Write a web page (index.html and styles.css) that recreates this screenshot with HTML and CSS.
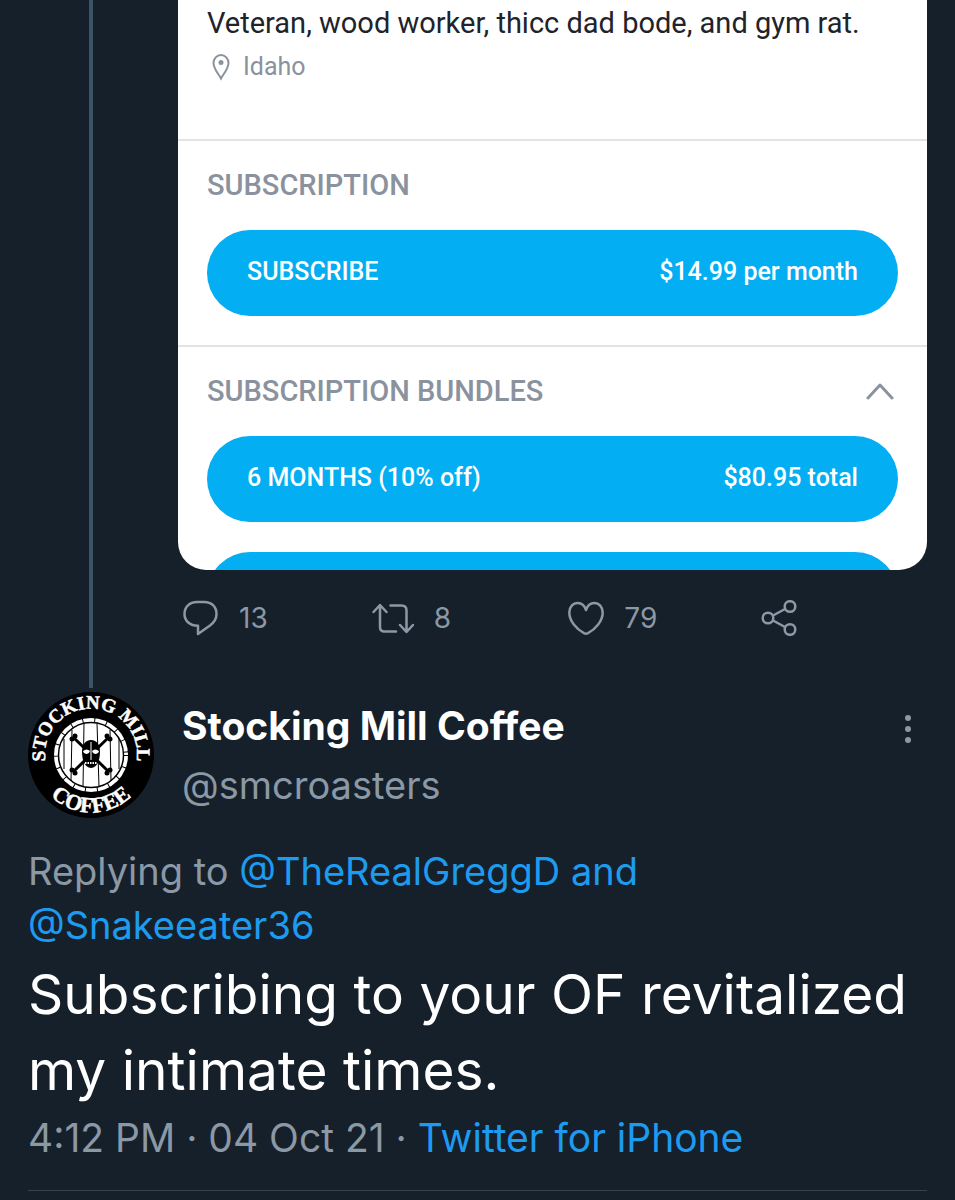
FILE: index.html
```html
<!DOCTYPE html>
<html lang="en">
<head>
    <meta charset="UTF-8">
    <meta name="viewport" content="width=device-width, initial-scale=1.0">
    <title>Thread</title>
    <link rel="stylesheet" href="styles.css">
</head>
<body>
    <main>
        <article class="parent">
            <div class="rail"></div>
            <div class="content">
                <div class="card">
                    <div class="profile">
                        <p class="bio">Veteran, wood worker, thicc dad bode, and gym rat.</p>
                        <p class="location">
                            <svg width="20" height="28" viewBox="0 0 20 28" fill="none" stroke="currentColor" stroke-width="2">
                                <path d="M10 25.5C8 21.5 2.5 16 2.5 10a7.5 8 0 0 1 15 0c0 6-5.500 11.500-7.500 15.500z"/>
                                <circle cx="10" cy="9.500" r="2.500" fill="currentColor" stroke="none"/>
                            </svg>
                            Idaho
                        </p>
                    </div>
                    <section>
                        <h3>SUBSCRIPTION</h3>
                        <button class="plan"><span>SUBSCRIBE</span><span>$14.99 per month</span></button>
                    </section>
                    <section>
                        <div class="section-head">
                            <h3>SUBSCRIPTION BUNDLES</h3>
                            <button class="icon-button toggle" aria-label="Collapse bundles">
                                <svg width="28" height="18" viewBox="0 0 28 18" fill="none" stroke="currentColor" stroke-width="3" stroke-linecap="round" stroke-linejoin="round">
                                    <path d="M2 15 14 2l12 13"/>
                                </svg>
                            </button>
                        </div>
                        <button class="plan"><span>6 MONTHS (10% off)</span><span>$80.95 total</span></button>
                    </section>
                    <div class="more-plans"><div class="plan"></div></div>
                </div>
                <div class="actions">
                    <button class="icon-button" aria-label="Reply">
                        <svg width="36" height="36" viewBox="0 0 36 36" fill="none" stroke="currentColor" stroke-width="2.500" stroke-linejoin="round">
                            <path d="M14 2h7c8 0 12.500 5 12.500 12 0 5-2.500 8.500-6.500 11.500L15 34v-8.200C7 25.800 1.500 21 1.500 14 1.500 7 6.500 2 14 2z"/>
                        </svg>
                        <span>13</span>
                    </button>
                    <button class="icon-button retweet" aria-label="Retweet">
                        <svg width="42" height="36" viewBox="0 0 42 36" fill="none" stroke="currentColor" stroke-width="2.500" stroke-linecap="round" stroke-linejoin="round">
                            <path d="M1.500 12 8 5l6.500 7M8 6v21q0 4.500 4.500 4.500h11.500M18.500 5.500h11q5 0 5 5V31M28 25l6.500 7 6.500-7"/>
                        </svg>
                        <span>8</span>
                    </button>
                    <button class="icon-button" aria-label="Like">
                        <svg width="36" height="36" viewBox="0 0 36 36" fill="none" stroke="currentColor" stroke-width="2.500" stroke-linejoin="round">
                            <path d="M18 10C16.500 5.500 13.500 3 9.800 3 5 3 1.300 7 1.300 12.500c0 9 7.700 17 14.700 20.700q2 1 4 0c7-3.700 14.700-11.700 14.700-20.700C34.700 7 31 3 26.200 3 22.500 3 19.500 5.500 18 10z"/>
                        </svg>
                        <span>79</span>
                    </button>
                    <button class="icon-button" aria-label="Share">
                        <svg width="36" height="36" viewBox="0 0 36 36" fill="none" stroke="currentColor" stroke-width="2.500">
                            <circle cx="7" cy="18" r="5.300"/>
                            <circle cx="29" cy="6.500" r="5.300"/>
                            <circle cx="29" cy="29.500" r="5.300"/>
                            <path d="M12 15.500 24 9M12 20.500 24 27"/>
                        </svg>
                    </button>
                </div>
            </div>
        </article>

        <article class="tweet">
            <header>
                <svg class="avatar" width="126" height="126" viewBox="0 0 126 126" role="img" aria-label="Stocking Mill Coffee logo">
                    <defs>
                        <path id="arc-top" d="M24 87A46 46 0 1 1 102 87"/>
                        <path id="arc-bottom" d="M8 81A58 58 0 0 0 118 81"/>
                    </defs>
                    <circle cx="63" cy="63" r="63"/>
                    <text class="logo-text"><textPath href="#arc-top" startOffset="50%">STOCKING MILL</textPath></text>
                    <text class="logo-text logo-text-bottom"><textPath href="#arc-bottom" startOffset="50%">COFFEE</textPath></text>
                    <!-- barrel head -->
                    <circle cx="63" cy="63" r="37" fill="#fff"/>
                    <g fill="none" stroke="#000">
                        <circle cx="63" cy="63" r="32.500" stroke-width="1.500"/>
                        <circle cx="63" cy="63" r="35" stroke-width="5" stroke-dasharray="1 11"/>
                        <path d="M44 38 43 89M56 31 55 95M69 31 71 95M82 38 83 89M36 47v30M91 47v30" stroke-width="1"/>
                        <path d="M46 46 80 79M80 46 46 79" stroke-width="3"/>
                    </g>
                    <circle cx="44" cy="47" r="2.500"/><circle cx="47" cy="44" r="2.500"/>
                    <circle cx="79" cy="44" r="2.500"/><circle cx="82" cy="47" r="2.500"/>
                    <circle cx="44" cy="78" r="2.500"/><circle cx="47" cy="81" r="2.500"/>
                    <circle cx="79" cy="81" r="2.500"/><circle cx="82" cy="78" r="2.500"/>
                    <path d="M63 48c-6 0-9 5-9 12 0 8 3 16 9 16s9-8 9-16c0-7-3-12-9-12z"/>
                    <path d="M55 59q4-3 7 0-1 3-4 3-3-1-3-3zM71 59q-4-3-7 0 1 3 4 3 3-1 3-3zM62.500 50h1v18h-1z" fill="#fff"/>
                    <path d="M57 71h12" stroke="#fff" stroke-width="2" stroke-dasharray="1.500 1"/>
                </svg>
                <div class="author">
                    <h2>Stocking Mill Coffee</h2>
                    <p class="handle">@smcroasters</p>
                </div>
                <button class="icon-button menu" aria-label="More options">
                    <svg width="8" height="30" viewBox="0 0 8 30" fill="currentColor">
                        <circle cx="4" cy="4" r="3"/><circle cx="4" cy="15" r="3"/><circle cx="4" cy="26" r="3"/>
                    </svg>
                </button>
            </header>
            <p class="replying">Replying to <a href="#">@TheRealGreggD and</a><br><a href="#">@Snakeeater36</a></p>
            <p class="message">Subscribing to your OF revitalized my intimate times.</p>
            <p class="meta">4:12 PM · 04 Oct 21 · <a href="#">Twitter for iPhone</a></p>
        </article>
    </main>
</body>
</html>
```
FILE: styles.css
```css
* {
    box-sizing: border-box;
}
body, h2, h3, p {
    margin: 0;
}
body {
    background-color: #16202a;
    color: #8b98a5;
    font-family: Inter, "Liberation Sans", sans-serif;
}
main {
    padding: 0 28px;
}
a {
    color: #1d9bf0;
    text-decoration: none;
}
button {
    border: none;
    font: inherit;
    cursor: pointer;
}
svg {
    flex-shrink: 0;
}
.parent {
    display: flex;
    gap: 24px;
}
.rail {
    flex: 0 0 126px;
    display: flex;
    justify-content: center;
    padding-bottom: 4px;
}
.rail::before {
    content: "";
    width: 4px;
    background-color: #3d5466;
}
.content {
    flex: 1;
    min-width: 0;
}

/* shared profile card */
.card {
    background-color: #fff;
    border-radius: 0 0 28px 28px;
    overflow: hidden;
    color: #8a929e;
    font-family: Roboto, sans-serif;
}
.profile {
    padding: 0 29px 50px;
}
.bio {
    padding-top: 1px;
    color: #20232a;
    font-size: 29px;
    line-height: 44px;
}
.location {
    display: flex;
    align-items: center;
    gap: 12px;
    padding-left: 4px;
    font-size: 25px;
    line-height: 44px;
}
section {
    border-top: 2px solid #e1e3e7;
    padding: 0 29px 29px;
}
section:last-of-type {
    padding-bottom: 30px;
}
.section-head {
    display: flex;
    justify-content: space-between;
    align-items: center;
}
h3 {
    font-size: 29px;
    font-weight: 500;
    line-height: 89px;
}
.plan {
    display: flex;
    justify-content: space-between;
    align-items: center;
    width: 100%;
    height: 86px;
    padding: 0 40px 4px;
    border-radius: 43px;
    background-color: #03aef2;
    color: #fff;
    font-size: 25px;
    font-weight: 500;
}
.more-plans {
    height: 18px;
    padding: 0 29px;
    overflow: hidden;
}

.icon-button {
    display: flex;
    align-items: center;
    padding: 0;
    background: none;
    color: inherit;
}
.toggle {
    margin-right: 4px;
}
.actions {
    display: grid;
    grid-template-columns: 1fr 1fr 1fr 166px;
    height: 122px;
    padding: 30px 0 56px 5px;
}
.actions .icon-button {
    gap: 20px;
    font-size: 28px;
}
.actions .retweet {
    margin-left: -4px;
}

.tweet header {
    display: flex;
    align-items: flex-start;
}
.author {
    flex: 1;
    padding: 4px 0 0 28px;
}
h2 {
    color: #fff;
    font-size: 39px;
    font-weight: 700;
    line-height: 60px;
}
.handle {
    font-size: 38px;
    line-height: 58px;
}
.menu {
    margin: 22px 15px 0 0;
}
.avatar {
    overflow: visible;
}
.logo-text {
    fill: #fff;
    stroke: #fff;
    stroke-width: 0.5px;
    font-family: "Liberation Serif", serif;
    font-size: 19px;
    font-weight: 700;
    text-anchor: middle;
}
.logo-text-bottom {
    font-size: 22px;
}
.replying {
    padding-top: 26px;
    font-size: 38px;
    line-height: 54px;
}
.message {
    padding-top: 4px;
    color: #fff;
    font-size: 55px;
    line-height: 76px;
}
.meta {
    padding-bottom: 22px;
    border-bottom: 1px solid #38434f;
    font-size: 39px;
    line-height: 60px;
}
```
